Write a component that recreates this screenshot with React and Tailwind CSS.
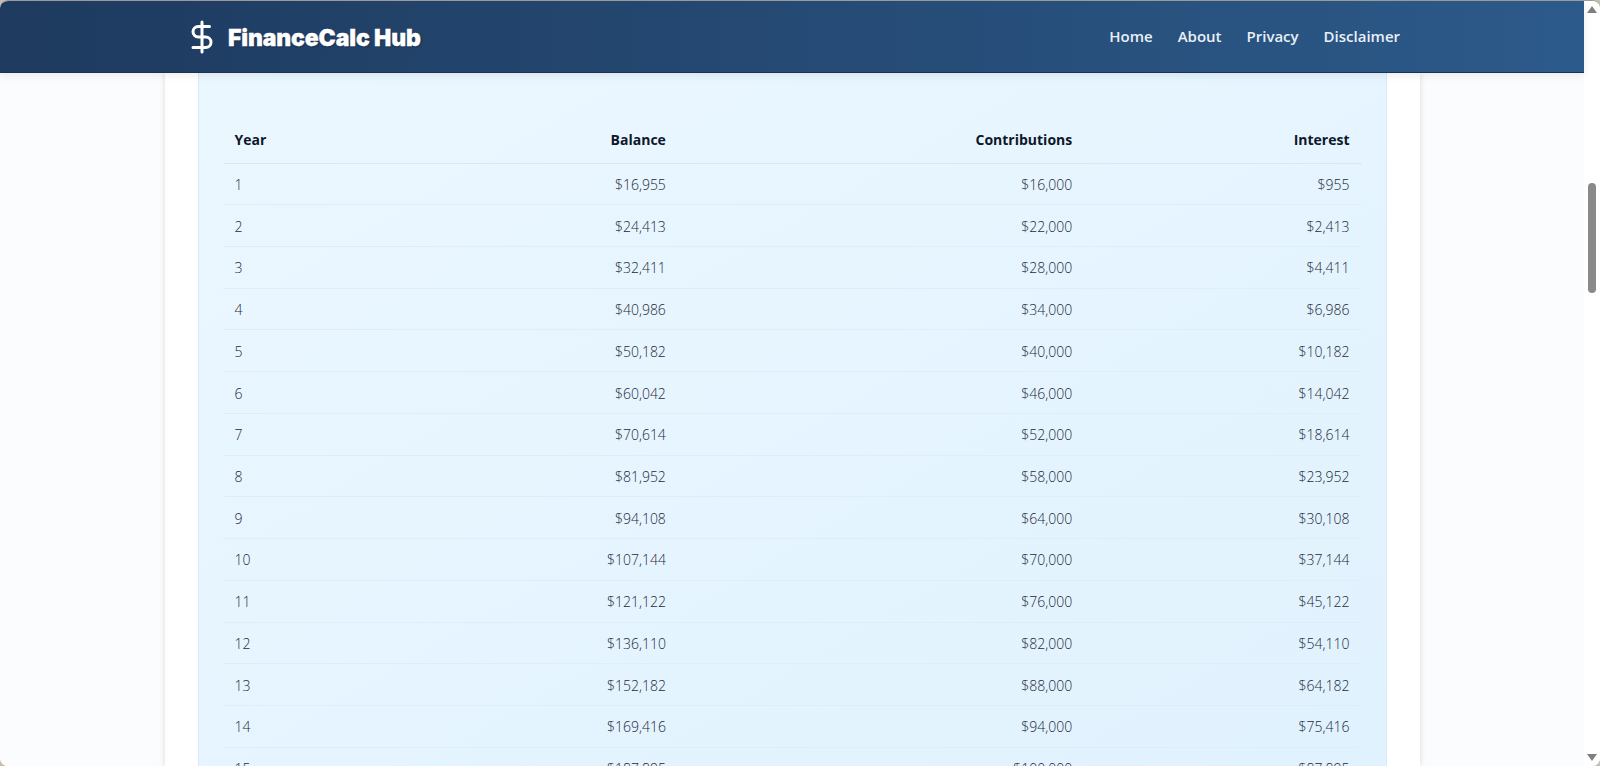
import React from 'react';
import { DollarSign } from 'lucide-react';

const rows = [
  ['1', '$16,955', '$16,000', '$955'],
  ['2', '$24,413', '$22,000', '$2,413'],
  ['3', '$32,411', '$28,000', '$4,411'],
  ['4', '$40,986', '$34,000', '$6,986'],
  ['5', '$50,182', '$40,000', '$10,182'],
  ['6', '$60,042', '$46,000', '$14,042'],
  ['7', '$70,614', '$52,000', '$18,614'],
  ['8', '$81,952', '$58,000', '$23,952'],
  ['9', '$94,108', '$64,000', '$30,108'],
  ['10', '$107,144', '$70,000', '$37,144'],
  ['11', '$121,122', '$76,000', '$45,122'],
  ['12', '$136,110', '$82,000', '$54,110'],
  ['13', '$152,182', '$88,000', '$64,182'],
  ['14', '$169,416', '$94,000', '$75,416'],
  ['15', '$187,895', '$100,000', '$87,895'],
];

const navItems = ['Home', 'About', 'Privacy', 'Disclaimer'];

const Header = () => (
  <header className="relative z-10 h-[72px] shrink-0 bg-gradient-to-r from-[#1e3a5f] to-[#2c5a8a] border-b border-[#1a3352] shadow-[0_3px_8px_rgba(0,0,0,0.07)]">
    <div className="mx-auto flex h-full max-w-7xl items-center justify-between px-8">
      <div className="flex items-center gap-2 text-white">
        <DollarSign size={36} strokeWidth={2} />
        <span className="pt-[4px] font-['Inter',sans-serif] text-[23px] font-black tracking-[-0.15px] [-webkit-text-stroke:0.3px_white] [text-shadow:1px_1px_2px_rgba(0,0,0,0.3)]">
          FinanceCalc Hub
        </span>
      </div>
      <nav className="flex items-center gap-[25px]">
        {navItems.map((item) => (
          <a key={item} className="text-[15px] font-semibold text-[#e8f0f8]">
            {item}
          </a>
        ))}
      </nav>
    </div>
  </header>
);

const ScheduleTable = () => (
  <table className="w-full table-fixed border-collapse text-[14px]">
    <colgroup>
      <col className="w-[227px]" />
      <col className="w-[228px]" />
      <col className="w-[406px]" />
      <col className="w-[277px]" />
    </colgroup>
    <thead>
      <tr className="h-[48px] border-b border-[#dbe8f2] text-[#0f172a]">
        <th className="px-3 pt-[2px] text-left font-bold">Year</th>
        <th className="px-3 pt-[2px] text-right font-bold">Balance</th>
        <th className="px-3 pt-[2px] text-right font-bold">Contributions</th>
        <th className="px-3 pt-[2px] text-right font-bold">Interest</th>
      </tr>
    </thead>
    <tbody className="font-light text-[#1e293b]">
      {rows.map((row) => (
        <tr key={row[0]} className="h-[41.74px] border-b border-[#dfedf7]">
          <td className="px-3 pt-px text-left">{row[0]}</td>
          <td className="px-3 pt-px text-right">{row[1]}</td>
          <td className="px-3 pt-px text-right">{row[2]}</td>
          <td className="px-3 pt-px text-right">{row[3]}</td>
        </tr>
      ))}
    </tbody>
  </table>
);

const Scrollbar = () => (
  <aside className="flex w-4 shrink-0 flex-col items-center justify-between bg-white py-[5px]">
    <span className="h-0 w-0 border-x-[5px] border-b-[7px] border-x-transparent border-b-[#7f7f7f]" />
    <span className="mb-auto mt-[170px] h-[110px] w-2 rounded-full bg-[#8a8a8a]" />
    <span className="h-0 w-0 border-x-[5px] border-t-[7px] border-x-transparent border-t-[#7f7f7f]" />
  </aside>
);

export default function App() {
  return (
    <div className="h-[766px] w-full overflow-hidden bg-[#c9bdae]">
      <div className="flex h-full overflow-hidden rounded-[8px] border-t border-[#9a9a9a] bg-white font-['Open_Sans',sans-serif]">
        <div className="flex min-w-0 flex-1 flex-col bg-[#fbfcfe]">
          <Header />
          <main className="min-h-0 flex-1 overflow-hidden">
            <div className="mx-auto h-full w-[1255px] bg-white px-[33px] shadow-[0_0_6px_rgba(0,0,0,0.14)]">
              <section className="h-full border-x border-[#d6eafa] bg-gradient-to-br from-[#ebf7ff] to-[#e0f2fe] px-[24px] pt-[42px]">
                <ScheduleTable />
              </section>
            </div>
          </main>
        </div>
        <Scrollbar />
      </div>
    </div>
  );
}
